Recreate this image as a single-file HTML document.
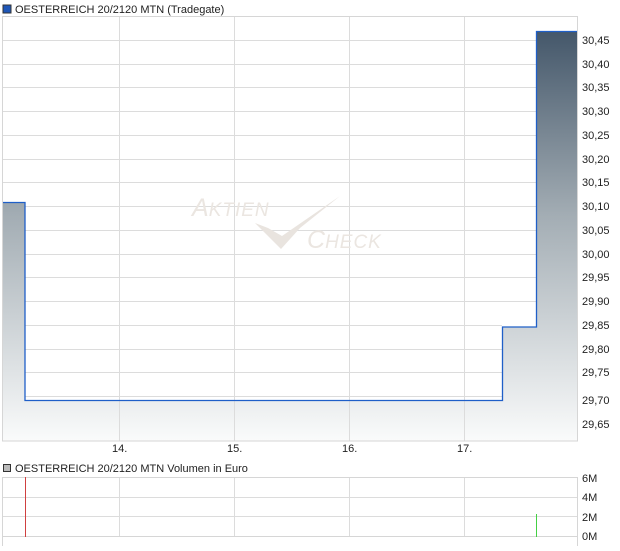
<!DOCTYPE html>
<html><head><meta charset="utf-8"><style>
body{margin:0;background:#fff;width:620px;height:546px;overflow:hidden;font-family:"Liberation Sans",sans-serif;}
</style></head><body>
<svg width="620" height="546" xmlns="http://www.w3.org/2000/svg" font-family="Liberation Sans, sans-serif" font-size="11">
<defs>
<linearGradient id="g" gradientUnits="userSpaceOnUse" x1="0" y1="31" x2="0" y2="441">
<stop offset="0" stop-color="#44576a"/><stop offset="0.45" stop-color="#a3adb4"/><stop offset="1" stop-color="#fafbfb"/>
</linearGradient>
</defs>
<rect x="3" y="5" width="8" height="8" fill="#1f57b8" stroke="#333" stroke-width="1"/>
<text x="15" y="13" fill="#222">OESTERREICH 20/2120 MTN (Tradegate)</text>
<path d="M3 202 L25 202 L25 400 L502 400 L502 327 L536 327 L536 31 L577 31 L577 441 L3 441 Z" fill="url(#g)"/>
<g stroke="#dcdcdc" stroke-width="1">
<line x1="119.5" y1="16" x2="119.5" y2="441"/><line x1="234.5" y1="16" x2="234.5" y2="441"/>
<line x1="349.5" y1="16" x2="349.5" y2="441"/><line x1="464.5" y1="16" x2="464.5" y2="441"/>
</g>
<g stroke="#dcdcdc" stroke-width="1">
<line x1="3" y1="40.5" x2="536" y2="40.5"/><line x1="3" y1="64.5" x2="536" y2="64.5"/>
<line x1="3" y1="87.5" x2="536" y2="87.5"/><line x1="3" y1="111.5" x2="536" y2="111.5"/>
<line x1="3" y1="135.5" x2="536" y2="135.5"/><line x1="3" y1="159.5" x2="536" y2="159.5"/>
<line x1="3" y1="182.5" x2="536" y2="182.5"/><line x1="25" y1="206.5" x2="536" y2="206.5"/>
<line x1="25" y1="230.5" x2="536" y2="230.5"/><line x1="25" y1="254.5" x2="536" y2="254.5"/>
<line x1="25" y1="277.5" x2="536" y2="277.5"/><line x1="25" y1="301.5" x2="536" y2="301.5"/>
<line x1="25" y1="325.5" x2="502" y2="325.5"/><line x1="25" y1="349.5" x2="502" y2="349.5"/>
<line x1="25" y1="372.5" x2="502" y2="372.5"/><line x1="25" y1="396.5" x2="502" y2="396.5"/>
</g>
<rect x="2.5" y="16.5" width="575" height="424.5" fill="none" stroke="#d6d6d6"/>
<g font-style="italic" fill="#ebe6e1">
<text x="192" y="216" font-size="25">A<tspan font-size="19" letter-spacing="1">KTIEN</tspan></text>
<text x="307" y="248" font-size="25">C<tspan font-size="19" letter-spacing="1">HECK</tspan></text>
</g>
<path d="M255 223 L268 228 L282 236 L340 196 L300 228 L281 249 Z" fill="#e9e4df"/>
<path d="M3 202.5 L25 202.5 L25 400.5 L502.5 400.5 L502.5 327 L536.5 327 L536.5 31.5 L577 31.5" fill="none" stroke="#1f5fc8" stroke-width="1.3"/>
<g fill="#222">
<text x="582" y="44">30,45</text><text x="582" y="68">30,40</text><text x="582" y="91">30,35</text>
<text x="582" y="115">30,30</text><text x="582" y="139">30,25</text><text x="582" y="163">30,20</text>
<text x="582" y="186">30,15</text><text x="582" y="210">30,10</text><text x="582" y="234">30,05</text>
<text x="582" y="258">30,00</text><text x="582" y="281">29,95</text><text x="582" y="305">29,90</text>
<text x="582" y="329">29,85</text><text x="582" y="353">29,80</text><text x="582" y="376">29,75</text>
<text x="582" y="404">29,70</text><text x="582" y="428">29,65</text>
<text x="112" y="452">14.</text><text x="227" y="452">15.</text><text x="342" y="452">16.</text><text x="457" y="452">17.</text>
</g>
<rect x="3.5" y="464.5" width="7" height="7" fill="#bbb" stroke="#333"/>
<text x="15" y="472" fill="#222">OESTERREICH 20/2120 MTN Volumen in Euro</text>
<g stroke="#dcdcdc">
<line x1="119.5" y1="477" x2="119.5" y2="537"/><line x1="234.5" y1="477" x2="234.5" y2="537"/>
<line x1="349.5" y1="477" x2="349.5" y2="537"/><line x1="464.5" y1="477" x2="464.5" y2="537"/>
<line x1="3" y1="497.5" x2="578" y2="497.5"/><line x1="3" y1="516.5" x2="578" y2="516.5"/>
</g>
<path d="M2.5 546 L2.5 477.5 L577.5 477.5 L577.5 546" fill="none" stroke="#d6d6d6"/>
<line x1="2.5" y1="536.5" x2="578" y2="536.5" stroke="#d6d6d6"/>
<line x1="25.5" y1="477" x2="25.5" y2="537" stroke="#d04040"/>
<line x1="536.5" y1="514" x2="536.5" y2="537" stroke="#44d044"/>
<g fill="#222"><text x="582" y="482">6M</text><text x="582" y="501">4M</text><text x="582" y="521">2M</text><text x="582" y="540">0M</text></g>
</svg>
</body></html>
